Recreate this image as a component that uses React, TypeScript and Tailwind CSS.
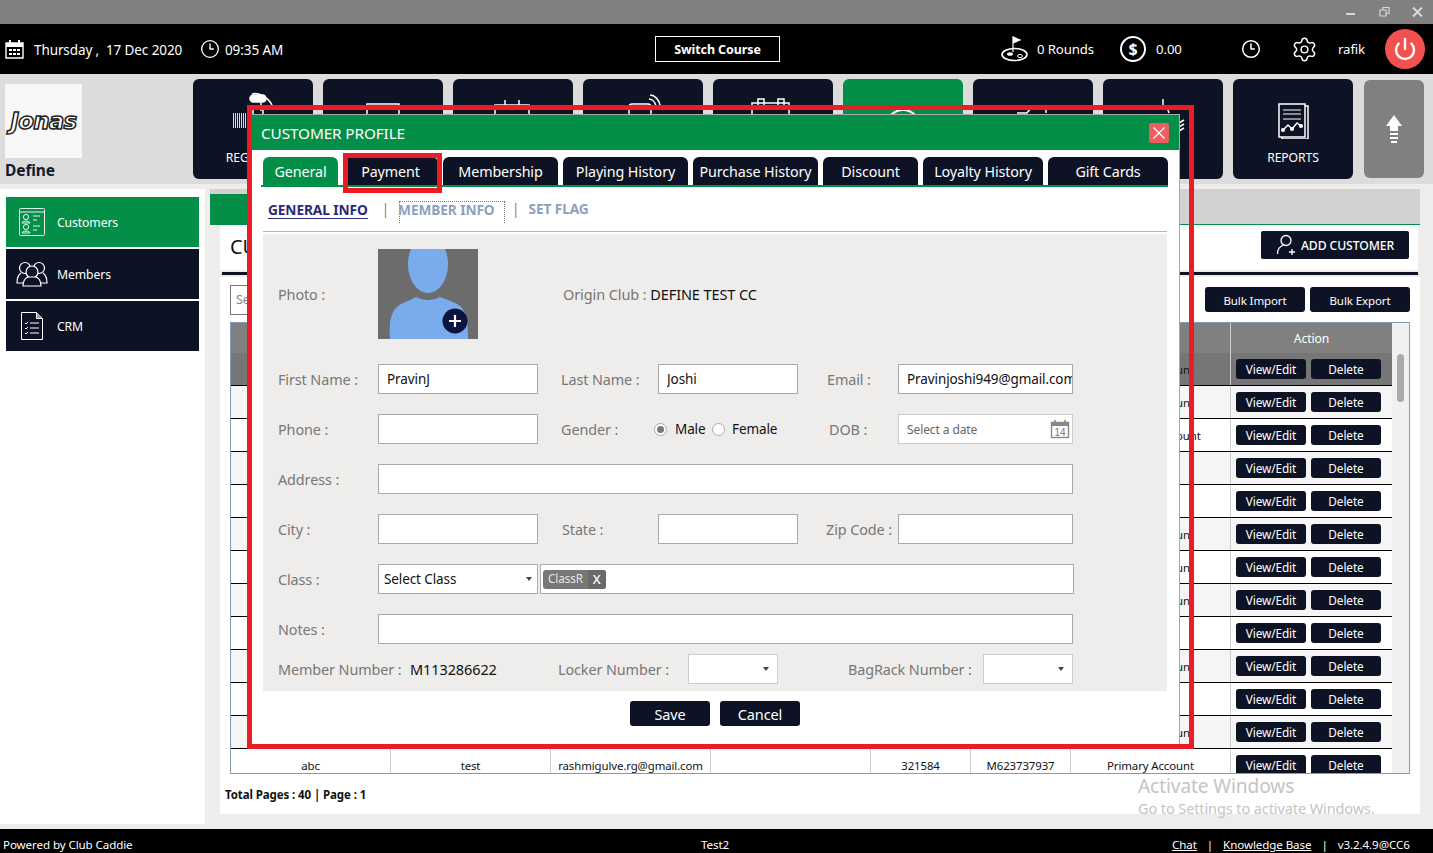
import { Clock3, Settings, Power } from "lucide-react";

const FONT = { fontFamily: '"Noto Sans", "Open Sans", sans-serif' };

function cx(...classes: Array<string | false | null | undefined>) {
  return classes.filter(Boolean).join(" ");
}

// account text for each table row, most of it sits behind the dialog
const ROWS = [
  "Primary Account",
  "Primary Account",
  "Secondary Account",
  "",
  "",
  "Primary Account",
  "Primary Account",
  "Primary Account",
  "",
  "Primary Account",
  "",
  "Primary Account",
];

const MODAL_TABS = [
  { label: "General", w: "w-[75px]", active: true },
  { label: "Payment", w: "w-[95px]" },
  { label: "Membership", w: "w-[115px]" },
  { label: "Playing History", w: "w-[125px]" },
  { label: "Purchase History", w: "w-[125px]" },
  { label: "Discount", w: "w-[95px]" },
  { label: "Loyalty History", w: "w-[120px]" },
  { label: "Gift Cards", w: "w-[120px]" },
];

function TileIcon({ n }: { n: number }) {
  const s = { stroke: "white", strokeWidth: 1.5, fill: "none" };
  return (
    <svg width="120" height="60" viewBox="0 0 120 60" className="block">
      {n === 0 && (
        <g {...s}>
          <rect x="57" y="16" width="16" height="7" rx="3.5" fill="white" />
          <path d="M59 15c6-2 16 3 20 11M68 24v8M60 28h10v8H60z" />
          <path
            d="M40.5 34v15M42.5 34v15M44.5 34v15M46.5 34v15M48.5 34v15M50.5 34v15M52.5 34v15"
            strokeWidth="1"
            opacity="0.85"
          />
        </g>
      )}
      {n === 1 && <rect x="44" y="25" width="32" height="24" {...s} />}
      {n === 2 && (
        <g {...s}>
          <path d="M42 26h34v22H42zM52 21v8M66 21v8" />
        </g>
      )}
      {n === 3 && (
        <g {...s}>
          <rect x="46" y="25" width="22" height="22" rx="3" />
          <path d="M66 20c3 0 6 3 7 7M67 16c5 0 9 5 10 10" />
        </g>
      )}
      {n === 4 && (
        <g {...s}>
          <path d="M39 24h37v24H39zM45 20h6v8h-6zM65 20h6v8h-6z" />
        </g>
      )}
      {n === 5 && <circle cx="60" cy="48" r="17" {...s} strokeWidth="2" />}
      {n === 6 && (
        <g {...s}>
          <path d="M44 34h10l3-4h16v4" />
        </g>
      )}
      {n === 7 && (
        <g {...s}>
          <path d="M60 20v8M56 28h8l2 6M76 44l5-3M76 48l5-3M76 52l5-3" />
        </g>
      )}
      {n === 8 && (
        <g {...s}>
          <rect x="49" y="27" width="26" height="33" fill="#0d1325" />
          <path d="M46 25h26v33H46z" fill="#0d1325" />
          <path d="M50 31h18M50 35h18M50 40h18" strokeWidth="1" />
          <path d="M50 51l5-5 4 4 5-6 4 3" />
          <circle cx="50" cy="51" r="1.3" fill="white" />
          <circle cx="59" cy="50" r="1.3" fill="white" />
          <circle cx="68" cy="47" r="1.3" fill="white" />
        </g>
      )}
    </svg>
  );
}

function Tile({ n, label, green }: { n: number; label?: string; green?: boolean }) {
  return (
    <div className={cx("h-[100px] w-[120px] shrink-0 rounded-md", green ? "bg-[#038f47]" : "bg-[#0d1325]")}>
      <TileIcon n={n} />
      {label && <div className="mt-[10px] text-center text-[12.2px] leading-[18px] text-white">{label}</div>}
    </div>
  );
}

function Field({ w, value }: { w: string; value?: string }) {
  return (
    <div className={cx("flex h-[30px] shrink-0 items-center border border-[#a9a9a9] bg-white pl-2 pt-[1px] text-[13.5px] text-[#111]", w)}>
      <span className="overflow-hidden whitespace-nowrap">{value}</span>
    </div>
  );
}

function Label({ w, text }: { w: string; text: string }) {
  return <div className={cx("shrink-0 whitespace-nowrap pt-[2px] text-[14.4px] text-[#777]", w)}>{text}</div>;
}

function Row({ children, mb = "mb-5" }: { children: React.ReactNode; mb?: string }) {
  return <div className={cx("flex h-[30px] items-center", mb)}>{children}</div>;
}

function Caret({ mr = "mr-2" }: { mr?: string }) {
  return <span className={cx("ml-auto h-0 w-0 border-x-[3px] border-t-[4px] border-x-transparent border-t-[#444]", mr)} />;
}

function DarkButton({ w, h, text, size }: { w: string; h: string; text: string; size: string }) {
  return (
    <div className={cx("flex shrink-0 items-center justify-center rounded-[3px] bg-[#0d1325] pt-[2px] text-white", w, h, size)}>{text}</div>
  );
}

function TableCell({ w, children }: { w: string; children?: React.ReactNode }) {
  return (
    <div className={cx("flex h-full shrink-0 items-center justify-center whitespace-nowrap border-r border-[#ccc] pt-[2px] text-[11.4px] text-[#111]", w)}>
      {children}
    </div>
  );
}

function TableRow({ account, i, last }: { account: string; i: number; last?: boolean }) {
  const selected = i === 0;
  return (
    <div
      className={cx(
        "flex h-[33px] shrink-0 border-b border-black",
        selected ? "bg-[#767676]" : i % 2 === 1 ? "bg-[#f5f5f5]" : "bg-white"
      )}
    >
      <TableCell w="w-[160px]">{last && "abc"}</TableCell>
      <TableCell w="w-[160px]">{last && "test"}</TableCell>
      <TableCell w="w-[160px]">{last && "rashmigulve.rg@gmail.com"}</TableCell>
      <TableCell w="w-[160px]" />
      <TableCell w="w-[100px]">{last && "321584"}</TableCell>
      <TableCell w="w-[100px]">{last && "M623737937"}</TableCell>
      <TableCell w="w-[160px]">{account}</TableCell>
      <div className="flex h-full w-[161px] shrink-0 gap-[5px] pl-[5px] pt-[6px]">
        <DarkButton w="w-[70px]" h="h-[20px]" text="View/Edit" size="text-[11.8px]" />
        <DarkButton w="w-[70px]" h="h-[20px]" text="Delete" size="text-[11.8px]" />
      </div>
    </div>
  );
}

function Avatar() {
  return (
    <svg width="100" height="90" viewBox="0 0 100 90" className="block">
      <rect width="100" height="90" fill="#6c6c6c" />
      <ellipse cx="50" cy="15" rx="20" ry="29" fill="#7aaced" />
      <path d="M12 90c-1-14 0-27 8-33 5-4 12-5 18-9 4 2 8 3 12 3s8-1 12-3c7 3 15 5 20 9 7 6 8 19 8 33z" fill="#7aaced" />
      <circle cx="77" cy="72" r="12.5" fill="#0c1440" />
      <path d="M77 66v12M71 72h12" stroke="white" strokeWidth="2.2" />
    </svg>
  );
}

function Modal() {
  return (
    <div className="absolute left-[250px] top-[114px] z-10 h-[631px] w-[930px] border border-[#a9a9a9] bg-white">
      <div className="flex h-[35px] items-center justify-between bg-[#038f47] pl-[10px] pr-[10px]">
        <span className="pt-[2px] text-[15.3px] text-white">CUSTOMER PROFILE</span>
        <div className="flex h-5 w-5 items-center justify-center rounded-[2px] bg-[#ef5d63]">
          <svg width="14" height="14" viewBox="0 0 14 14">
            <path d="M1.5 1.5l11 11M12.5 1.5l-11 11" stroke="white" strokeWidth="1.3" />
          </svg>
        </div>
      </div>

      <div className="ml-[10px] mt-[7px] w-[907px] border-b-2 border-[#038f47]">
        <div className="ml-[2px] flex gap-[5px]">
          {MODAL_TABS.map((tab) => (
            <div
              key={tab.label}
              className={cx(
                "flex h-[28px] shrink-0 items-center justify-center whitespace-nowrap rounded-t-md pt-[1px] text-[14.3px] text-white",
                tab.w,
                tab.active ? "bg-[#038f47]" : "bg-[#0d1325]"
              )}
            >
              {tab.label}
            </div>
          ))}
        </div>
      </div>

      <div className="ml-[12px] w-[904px] border-b border-[#b5b5b5] pb-[8px] pl-[5px] pt-[14px]">
        <div className="flex h-[22px] items-start text-[13.7px] font-bold leading-[16px]">
          <span className="border-b border-[#2a2a7a] leading-[17px] text-[#2a2a7a]">GENERAL INFO</span>
          <span className="ml-[14px] font-normal text-[#9c7a60]">|</span>
          <span className="ml-[10px] h-[22px] w-[106px] whitespace-nowrap border border-b-0 border-dotted border-[#777] text-[#8da0bd]">
            <span className="ml-[-2px]">MEMBER INFO</span>
          </span>
          <span className="ml-[7px] font-normal text-[#9c7a60]">|</span>
          <span className="ml-[9px] text-[#8da0bd]">SET FLAG</span>
        </div>
      </div>

      <div className="ml-[12px] mt-[2px] h-[457px] w-[904px] bg-[#eeedeb] pl-[15px] pt-[15px]">
        <div className="mb-[25px] flex h-[90px] items-center">
          <Label w="w-[100px]" text="Photo :" />
          <Avatar />
          <div className="ml-[85px] whitespace-nowrap pt-[2px] text-[14.5px] text-[#777]">
            Origin Club : <span className="text-[#111]">DEFINE TEST CC</span>
          </div>
        </div>

        <Row>
          <Label w="w-[100px]" text="First Name :" />
          <Field w="w-[160px]" value="PravinJ" />
          <Label w="ml-[23px] w-[97px]" text="Last Name :" />
          <Field w="w-[140px]" value="Joshi" />
          <Label w="ml-[29px] w-[71px]" text="Email :" />
          <Field w="w-[175px]" value="Pravinjoshi949@gmail.com" />
        </Row>

        <Row>
          <Label w="w-[100px]" text="Phone :" />
          <Field w="w-[160px]" />
          <Label w="ml-[23px] w-[93px]" text="Gender :" />
          <div className="flex h-[13px] w-[13px] shrink-0 items-center justify-center rounded-full border border-[#aaa] bg-white">
            <span className="h-[7px] w-[7px] rounded-full bg-[#777]" />
          </div>
          <span className="ml-2 w-[30px] shrink-0 pt-[1px] text-[13.5px] text-[#111]">Male</span>
          <div className="ml-[7px] h-[13px] w-[13px] shrink-0 rounded-full border border-[#aaa] bg-white" />
          <span className="ml-[7px] w-[46px] shrink-0 pt-[1px] text-[13.5px] text-[#111]">Female</span>
          <Label w="ml-[51px] w-[69px]" text="DOB :" />
          <div className="flex h-[30px] w-[175px] shrink-0 items-center border border-[#ccc] bg-white pl-2 text-[12px] text-[#666]">
            <span className="pt-[2px]">Select a date</span>
            <svg width="20" height="20" viewBox="0 0 20 20" className="ml-auto mr-[2px]">
              <rect x="1.5" y="3.5" width="17" height="15" fill="none" stroke="#888" strokeWidth="1.4" />
              <rect x="1.5" y="3.5" width="17" height="3.5" fill="#888" />
              <path d="M5 1v4M15 1v4" stroke="#888" strokeWidth="1.6" />
              <text x="10" y="16.5" textAnchor="middle" fontSize="10" fill="#777" fontFamily="Liberation Sans">
                14
              </text>
            </svg>
          </div>
        </Row>

        <Row>
          <Label w="w-[100px]" text="Address :" />
          <Field w="w-[695px]" />
        </Row>

        <Row>
          <Label w="w-[100px]" text="City :" />
          <Field w="w-[160px]" />
          <Label w="ml-[24px] w-[96px]" text="State :" />
          <Field w="w-[140px]" />
          <Label w="ml-[28px] w-[72px]" text="Zip Code :" />
          <Field w="w-[175px]" />
        </Row>

        <Row>
          <Label w="w-[100px]" text="Class :" />
          <div className="flex h-[30px] w-[160px] shrink-0 items-center border border-[#a9a9a9] bg-white pl-[5px] text-[13.5px] text-[#111]">
            <span className="pt-[1px]">Select Class</span>
            <Caret mr="mr-[5px]" />
          </div>
          <div className="ml-[2px] flex h-[30px] w-[534px] shrink-0 items-center border border-[#a9a9a9] bg-white pl-[2px]">
            <div className="flex h-[19px] items-center rounded-[3px] bg-[#777] text-[11.7px] leading-none text-[#e6e6e6]">
              <span className="pb-[1px] pl-[5px] pr-[5px]">ClassR</span>
              <span className="flex h-full items-center rounded-r-[3px] bg-[#6a6a6a] px-[5px] text-[13px] font-medium text-white">X</span>
            </div>
          </div>
        </Row>

        <Row mb="mb-[10px]">
          <Label w="w-[100px]" text="Notes :" />
          <Field w="w-[695px]" />
        </Row>

        <Row mb="mb-0">
          <Label w="w-[132px]" text="Member Number :" />
          <span className="w-[148px] shrink-0 pt-[2px] text-[14.5px] text-[#111]">M113286622</span>
          <Label w="w-[130px]" text="Locker Number :" />
          <div className="flex h-[30px] w-[90px] shrink-0 items-center border border-[#ccc] bg-white">
            <Caret />
          </div>
          <Label w="ml-[70px] w-[135px]" text="BagRack Number :" />
          <div className="flex h-[30px] w-[90px] shrink-0 items-center border border-[#ccc] bg-white">
            <Caret />
          </div>
        </Row>
      </div>

      <div className="mt-[10px] flex justify-center gap-[10px]">
        <DarkButton w="w-[80px]" h="h-[25px]" text="Save" size="text-[14.5px]" />
        <DarkButton w="w-[80px]" h="h-[25px]" text="Cancel" size="text-[14.5px]" />
      </div>
    </div>
  );
}

function SideItem({ label, green, children }: { label: string; green?: boolean; children: React.ReactNode }) {
  return (
    <div className={cx("flex h-[50px] items-center", green ? "bg-[#038f47]" : "bg-[#0d1325]")}>
      <div className="flex w-[51px] shrink-0 justify-center">{children}</div>
      <span className="pt-[2px] text-[12.2px] text-white">{label}</span>
    </div>
  );
}

export default function App() {
  return (
    <div className="relative h-[853px] w-[1433px] overflow-hidden bg-[#eeedeb] tracking-[-0.1px]" style={FONT}>
      {/* window title bar */}
      <div className="flex h-6 items-center justify-end bg-[#808080] text-[#d8d8d8]">
        <svg width="90" height="14" viewBox="0 0 90 14">
          <path d="M3 9h9" stroke="#d8d8d8" strokeWidth="2" />
          <path d="M37 5h6v6h-6zM40 5V2.5h6v6h-3" fill="none" stroke="#d8d8d8" strokeWidth="1.2" />
          <path d="M70 2.5l9 9M79 2.5l-9 9" stroke="#d8d8d8" strokeWidth="2" />
        </svg>
      </div>

      {/* top bar */}
      <div className="flex h-[50px] items-center bg-black text-[13.5px] text-white">
        <svg width="19" height="20" viewBox="0 0 19 20" className="ml-[5px]">
          <path d="M1 4h17v15H1z" fill="none" stroke="white" strokeWidth="1.4" />
          <path d="M1 4h17v4H1z" fill="white" />
          <path d="M5 1v4M14 1v4" stroke="white" strokeWidth="2" />
          <path d="M4 10h3v2H4zM8 10h3v2H8zM12 10h3v2h-3zM4 14h3v2H4zM8 14h3v2H8zM12 14h3v2h-3z" fill="white" />
        </svg>
        <span className="ml-[10px] w-[167px] shrink-0 whitespace-pre pt-[2px]">Thursday ,  17 Dec 2020</span>
        <Clock3 size={20} strokeWidth={1.6} className="ml-[-1px]" />
        <span className="ml-[5px] w-[430px] shrink-0 pt-[2px]">09:35 AM</span>
        <div className="flex h-[26px] w-[125px] shrink-0 items-center justify-center border border-white pt-[2px] text-[12.5px] font-bold">
          Switch Course
        </div>
        <svg width="27" height="26" viewBox="0 0 27 26" className="ml-[221px]">
          <path d="M12 16V1l7 3-7 3" fill="white" stroke="white" strokeWidth="1.2" />
          <ellipse cx="13.5" cy="18.5" rx="12.5" ry="6" fill="none" stroke="white" strokeWidth="1.6" />
          <ellipse cx="9" cy="18" rx="3" ry="1.8" fill="white" />
          <ellipse cx="19" cy="20" rx="2.5" ry="1.6" fill="none" stroke="white" />
        </svg>
        <span className="ml-[9px] w-[83px] shrink-0 pt-[2px] text-[13.2px]">0 Rounds</span>
        <div className="flex h-[26px] w-[26px] items-center justify-center rounded-full border-2 border-white text-[16px] font-bold leading-none">
          $
        </div>
        <span className="ml-[10px] w-[85px] shrink-0 pt-[2px] text-[13.2px]">0.00</span>
        <Clock3 size={20} strokeWidth={1.8} />
        <Settings size={27} strokeWidth={1.3} className="ml-[30px]" />
        <span className="ml-[20px] w-[47px] shrink-0 pt-[2px] text-[13.2px]">rafik</span>
        <div className="flex h-10 w-10 items-center justify-center rounded-full bg-[#f35050]">
          <Power size={24} strokeWidth={2.4} />
        </div>
      </div>

      {/* tile strip */}
      <div className="flex h-[110px] bg-[#dcdcdc]">
        <div className="ml-[5px] w-[188px] shrink-0 pt-[10px]">
          <div className="flex h-[74px] w-[77px] items-center justify-center bg-[#f7f7f7]">
            <span
              className="text-[23px] font-bold italic leading-none tracking-[-0.8px] text-white [-webkit-text-stroke:1.5px_#222]"
              style={{ fontFamily: '"DejaVu Sans", sans-serif' }}
            >
              Jonas
            </span>
          </div>
          <div className="text-[15.5px] font-bold leading-6 text-[#141a2e]">Define</div>
        </div>
        <div className="flex gap-[10px] pt-[5px]">
          <Tile n={0} label="REGISTER" />
          <Tile n={1} />
          <Tile n={2} />
          <Tile n={3} />
          <Tile n={4} />
          <Tile n={5} green />
          <Tile n={6} />
          <Tile n={7} />
          <Tile n={8} label="REPORTS" />
        </div>
        <div className="ml-[11px] mt-[6px] flex h-[98px] w-[60px] items-center justify-center rounded-md bg-[#808080]">
          <svg width="18" height="30" viewBox="0 0 18 30">
            <path d="M9 1l8 11h-4v5H5v-5H1z" fill="white" />
            <path d="M5 19h8v2H5zM5 23h8v2H5zM6 27h6v2H6z" fill="white" />
          </svg>
        </div>
      </div>

      {/* body */}
      <div className="flex h-[645px]">
        <div className="mt-[5px] h-[635px] w-[205px] shrink-0 bg-white px-[6px] pt-[8px]">
          <div className="flex flex-col gap-[2px]">
            <SideItem label="Customers" green>
              <svg width="26" height="28" viewBox="0 0 26 28" fill="none" stroke="white" strokeWidth="0.9">
                <rect x="0.5" y="0.5" width="25" height="27" rx="1" />
                <path d="M0.5 4h25" />
                <circle cx="7" cy="9" r="2.6" />
                <path d="M3 15c0-2.5 8-2.5 8 0zM14 8h7M14 12h4M14 18h7M14 22h4" />
                <circle cx="7" cy="19" r="2.6" />
                <path d="M3 25c0-2.5 8-2.5 8 0z" />
              </svg>
            </SideItem>
            <SideItem label="Members">
              <svg width="32" height="28" viewBox="0 0 32 28" fill="none" stroke="white" strokeWidth="1.2">
                <circle cx="9" cy="8" r="5.5" />
                <circle cx="23" cy="8" r="5.5" />
                <path d="M5 13C2 15 1 19 1 23h6M27 13c3 2 4 6 4 10h-6" />
                <circle cx="16" cy="12" r="6" fill="#0d1325" />
                <path d="M7 26c0-6 3-9 6-9h6c3 0 6 3 6 9z" fill="#0d1325" />
              </svg>
            </SideItem>
            <SideItem label="CRM">
              <svg width="22" height="28" viewBox="0 0 22 28" fill="none" stroke="white" strokeWidth="1">
                <path d="M0.5 0.5h15l6 6v21h-21z" />
                <path d="M15.5 0.5v6h6" fill="#999" />
                <path d="M4 11l1 1 2-2M9 11h9M4 16l1 1 2-2M9 16h9M4 21l1 1 2-2M9 21h9" />
              </svg>
            </SideItem>
          </div>
        </div>

        <div className="ml-[5px] mt-[5px] w-[1210px] shrink-0">
          <div className="h-[36px] border-b border-[#038f47] bg-[#d2d2d2] pt-[5px]">
            <div className="h-[30px] w-[300px] bg-[#038f47]" />
          </div>

          <div className="ml-[10px] flex h-[45px] w-[1198px] items-start justify-between bg-white pl-[10px] pr-[9px] pt-[6px]">
            <span className="text-[20px] leading-[32px] text-[#0d1325]">CUSTOMERS</span>
            <div className="flex h-[28px] w-[148px] items-center justify-center gap-[3px] rounded-[2px] bg-[#0d1325] text-[12.2px] font-medium text-white">
              <svg width="22" height="22" viewBox="0 0 22 22" fill="none" stroke="white" strokeWidth="1.3">
                <circle cx="10" cy="6.5" r="5" />
                <path d="M1.5 20c0-5 3-8 6-9M16 15v6M13 18h6" />
              </svg>
              <span className="pt-[2px]">ADD CUSTOMER</span>
            </div>
          </div>

          <div className="ml-[12px] mt-[2px] h-[3px] w-[1196px] bg-[#0d1325]" />

          <div className="ml-[10px] mt-[2px] h-[537px] w-[1200px] bg-white pl-[10px]">
            <div className="flex items-start justify-between pr-[10px] pt-[8px]">
              <div className="flex h-[30px] w-[300px] items-center border border-[#777] pl-[5px] text-[12.5px] text-[#888]">Search</div>
              <div className="mt-[2px] flex gap-[5px]">
                <DarkButton w="w-[100px]" h="h-[25px]" text="Bulk Import" size="text-[11.5px]" />
                <DarkButton w="w-[100px]" h="h-[25px]" text="Bulk Export" size="text-[11.5px]" />
              </div>
            </div>

            <div className="mt-[7px] flex h-[452px] w-[1180px] overflow-hidden border border-[#7f9db9]">
              <div className="flex w-[1161px] shrink-0 flex-col">
                <div className="flex h-[30px] shrink-0 bg-[#808080]">
                  <div className="w-[1000px] shrink-0 border-r border-[#ccc]" />
                  <div className="flex flex-1 items-center justify-center pt-[2px] text-[12.2px] text-white">Action</div>
                </div>
                {ROWS.map((account, i) => (
                  <TableRow key={i} account={account} i={i} />
                ))}
                <TableRow account="Primary Account" i={12} last />
              </div>
              <div className="flex-1 bg-[#f0f0f0] pl-[5px] pt-[31px]">
                <div className="h-[48px] w-[7px] rounded-full bg-[#aaa]" />
              </div>
            </div>

            <div className="ml-[-5px] mt-[12px] text-[11.5px] font-bold text-[#111]">Total Pages : 40 | Page : 1</div>
          </div>
        </div>
      </div>

      {/* footer */}
      <div className="flex h-6 items-center bg-black pl-[3px] pt-[8px] text-[11.6px] text-white">
        <span className="w-[698px] shrink-0">Powered by Club Caddie</span>
        <span className="w-[471px] shrink-0">Test2</span>
        <span className="underline">Chat</span>
        <span className="mx-[10px]">|</span>
        <span className="underline">Knowledge Base</span>
        <span className="mx-[10px]">|</span>
        <span>v3.2.4.9@CC6</span>
      </div>

      {/* watermark over the page */}
      <div className="pointer-events-none absolute left-[1138px] top-[773px] z-20 text-[#c4c4c4]">
        <div className="text-[19.1px] leading-[26px]">Activate Windows</div>
        <div className="mt-[-1px] whitespace-nowrap text-[14.5px] leading-[20px]">Go to Settings to activate Windows.</div>
      </div>

      <Modal />

      {/* red highlight boxes drawn over the dialog */}
      <div className="pointer-events-none absolute left-[247px] top-[105px] z-20 h-[644px] w-[947px] border-[5px] border-[#ed1c24]" />
      <div className="pointer-events-none absolute left-[343px] top-[153px] z-20 h-[40px] w-[99px] border-[5px] border-[#ed1c24]" />
    </div>
  );
}
